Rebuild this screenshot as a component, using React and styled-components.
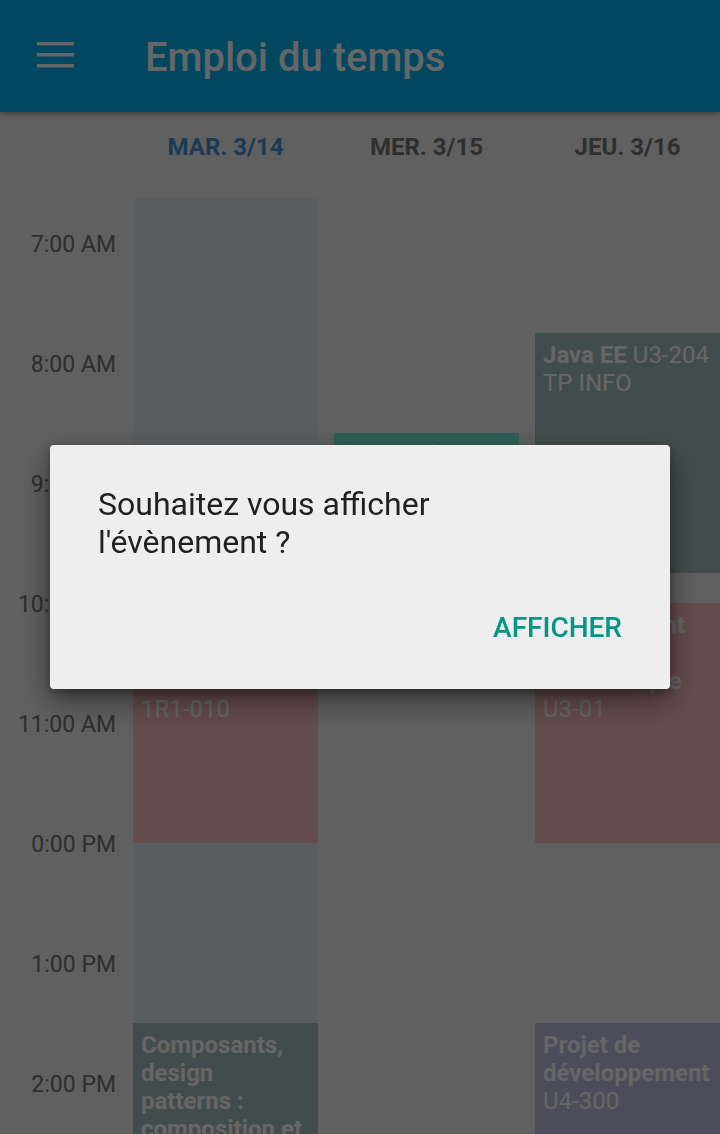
import React from "react";
import styled, { createGlobalStyle } from "styled-components";

const GlobalStyle = createGlobalStyle`
  html, body {
    margin: 0;
    padding: 0;
    background: #efefef;
    font-family: Roboto, "Noto Sans", sans-serif;
  }
  * {
    box-sizing: border-box;
  }
`;

const HOUR = 120;
const START_OFFSET = 45;

const Screen = styled.div`
  width: 720px;
  height: 1134px;
  display: flex;
  flex-direction: column;
  overflow: hidden;
  background: #efefef;
`;

const AppBar = styled.header`
  height: 112px;
  flex-shrink: 0;
  display: flex;
  align-items: center;
  padding-left: 37px;
  background: #00b1ee;
  box-shadow: 0 2px 6px rgba(0, 0, 0, 0.35);
  position: relative;
  z-index: 2;
`;

const MenuButton = styled.div`
  width: 37px;
  height: 26px;
  margin-top: -2px;
  display: flex;
`;

const Title = styled.h1`
  margin: 4px 0 0 71px;
  font-size: 40px;
  line-height: 48px;
  font-weight: 500;
  color: #ffffff;
`;

// time column is 117 + 16 gap = 133px before the first day
const Columns = styled.div`
  display: grid;
  grid-template-columns: 117px repeat(3, 185px);
  column-gap: 16px;
`;

const DayHeaderRow = styled(Columns)`
  height: 86px;
  flex-shrink: 0;
  padding-top: 21px;
`;

const DayHeader = styled.div`
  text-align: center;
  font-size: 24px;
  line-height: 28px;
  font-weight: 700;
  color: ${(p) => (p.$today ? "#4491d4" : "#767676")};
`;

const Body = styled(Columns)`
  flex: 1;
  min-height: 0;
`;

const TimeColumn = styled.div`
  padding-top: ${START_OFFSET - 11}px;
`;

const TimeLabel = styled.div`
  height: ${HOUR}px;
  padding-right: 1px;
  text-align: right;
  font-size: 23px;
  line-height: 26px;
  color: #747474;
`;

const DayColumn = styled.div`
  position: relative;
  overflow: hidden;
  background-color: ${(p) => (p.$today ? "#e1ebf2" : "transparent")};
  background-image: linear-gradient(to bottom, #e9e9e9 1px, transparent 1px);
  background-size: 100% ${HOUR}px;
  background-position: 0 ${START_OFFSET}px;
`;

const Event = styled.div`
  position: absolute;
  left: 0;
  right: 0;
  padding: 8px 8px;
  overflow: hidden;
  background: ${(p) => p.$color};
  color: #ffffff;
  font-size: 24px;
  line-height: 28px;
`;

const EventTitle = styled.span`
  font-weight: 700;
`;

const Overlay = styled.div`
  position: fixed;
  inset: 0;
  background: rgba(0, 0, 0, 0.6);
  display: flex;
  align-items: center;
  justify-content: center;
  z-index: 10;
`;

const Dialog = styled.div`
  width: 620px;
  padding: 40px 48px 43px;
  background: #eeeeee;
  border-radius: 4px;
  box-shadow: 0 12px 32px rgba(0, 0, 0, 0.45), 0 4px 10px rgba(0, 0, 0, 0.3);
`;

const Message = styled.p`
  margin: 0;
  font-size: 32px;
  line-height: 38px;
  color: #212121;
`;

const Actions = styled.div`
  display: flex;
  justify-content: flex-end;
  margin-top: 49px;
`;

const TextButton = styled.button`
  border: none;
  background: none;
  padding: 0;
  font-family: Roboto, sans-serif;
  font-size: 28px;
  line-height: 36px;
  font-weight: 500;
  color: #009688;
`;

const days = [
  { label: "MAR. 3/14", today: true },
  { label: "MER. 3/15" },
  { label: "JEU. 3/16" },
];

const hours = ["7:00 AM", "8:00 AM", "9:00 AM", "10:00 AM", "11:00 AM", "0:00 PM", "1:00 PM", "2:00 PM"];

const events = [
  [
    { start: 10, end: 12, color: "#fdbec1", title: "Architecture des systèmes d'information", room: "1R1-010" },
    { start: 13.5, end: 16, color: "#a3c1be", title: "Composants, design patterns\u00a0: composition et héritage", room: "U3-204" },
  ],
  [
    { start: 8 + 35 / 60, end: 10.5, color: "#77f0d5", title: "(Anglais) Communication", room: "U2-113" },
  ],
  [
    { start: 7.75, end: 9.75, color: "#a3c1be", title: "Java EE", room: "U3-204", kind: "TP INFO" },
    { start: 10, end: 12, color: "#fdbec1", title: "Management de projet informatique", room: "U3-01" },
    { start: 13.5, end: 16, color: "#bebee1", title: "Projet de développement", room: "U4-300" },
  ],
];

const MenuIcon = () => (
  <svg width="37" height="26" viewBox="0 0 37 26">
    <rect x="0" y="0" width="37" height="3.5" fill="#ffffff" />
    <rect x="0" y="11" width="37" height="3.5" fill="#ffffff" />
    <rect x="0" y="22" width="37" height="3.5" fill="#ffffff" />
  </svg>
);

const App = () => {
  return (
    <>
      <GlobalStyle />
      <Screen>
        <AppBar>
          <MenuButton>
            <MenuIcon />
          </MenuButton>
          <Title>Emploi du temps</Title>
        </AppBar>

        <DayHeaderRow>
          <div />
          {days.map((d) => (
            <DayHeader key={d.label} $today={d.today}>
              {d.label}
            </DayHeader>
          ))}
        </DayHeaderRow>

        <Body>
          <TimeColumn>
            {hours.map((h) => (
              <TimeLabel key={h}>{h}</TimeLabel>
            ))}
          </TimeColumn>
          {days.map((d, i) => (
            <DayColumn key={d.label} $today={d.today}>
              {events[i].map((ev) => (
                <Event
                  key={ev.title}
                  $color={ev.color}
                  style={{
                    top: START_OFFSET + (ev.start - 7) * HOUR,
                    height: (ev.end - ev.start) * HOUR,
                  }}
                >
                  <EventTitle>{ev.title}</EventTitle> {ev.room}
                  {ev.kind && (
                    <>
                      <br />
                      {ev.kind}
                    </>
                  )}
                </Event>
              ))}
            </DayColumn>
          ))}
        </Body>
      </Screen>

      <Overlay>
        <Dialog>
          <Message>
            Souhaitez vous afficher
            <br />
            l'évènement ?
          </Message>
          <Actions>
            <TextButton>AFFICHER</TextButton>
          </Actions>
        </Dialog>
      </Overlay>
    </>
  );
};

export default App;
